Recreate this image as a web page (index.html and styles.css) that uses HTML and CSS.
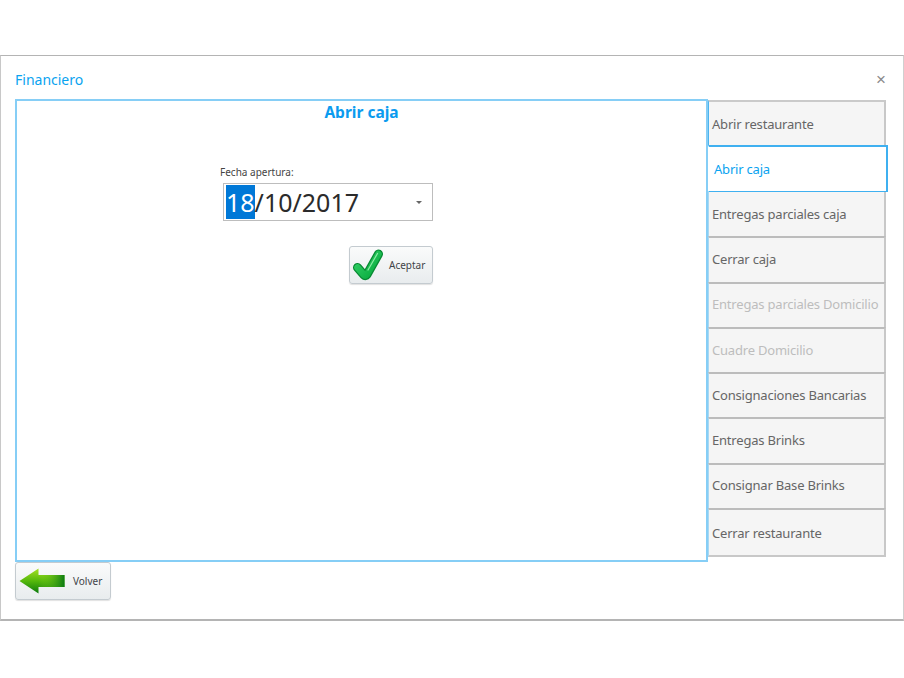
FILE: index.html
```html
<!DOCTYPE html>
<html lang="es">
<head>
<meta charset="utf-8">
<title>Financiero</title>
<link rel="stylesheet" href="styles.css">
</head>
<body>
<div class="window">
  <header class="header">
    <span class="title">Financiero</span>
    <span class="close">×</span>
  </header>
  <div class="main">
    <section class="panel">
      <h1 class="panel-title">Abrir caja</h1>
      <div class="form">
        <label class="label">Fecha apertura:</label>
        <div class="date">
          <span class="date-text"><span class="sel">18</span>/10/2017</span>
          <span class="caret"></span>
        </div>
        <button class="btn btn-ok">
          <svg class="ok-icon" width="32" height="32" viewBox="0 0 32 32">
            <defs>
              <linearGradient id="g1" x1="0" y1="0" x2="1" y2="1">
                <stop offset="0" stop-color="#35d268"/>
                <stop offset="1" stop-color="#05a83b"/>
              </linearGradient>
            </defs>
            <path d="M4.5 18.5 L11 26 Q12.5 27.5 14 25.5 L25.5 5" fill="none" stroke="#078a32" stroke-width="9" stroke-linecap="round" stroke-linejoin="round"/>
            <path d="M4.5 18.5 L11 26 Q12.5 27.5 14 25.5 L25.5 5" fill="none" stroke="url(#g1)" stroke-width="6.5" stroke-linecap="round" stroke-linejoin="round"/>
            <path d="M15 21 L24.5 4.5" fill="none" stroke="#8cecA4" stroke-width="1.2" stroke-linecap="round"/>
          </svg>
          <span>Aceptar</span>
        </button>
      </div>
    </section>
    <nav class="tabs">
      <a class="tab tab-1">Abrir restaurante</a>
      <a class="tab tab-active">Abrir caja</a>
      <a class="tab tab-next">Entregas parciales caja</a>
      <a class="tab">Cerrar caja</a>
      <a class="tab tab-off">Entregas parciales Domicilio</a>
      <a class="tab tab-off">Cuadre Domicilio</a>
      <a class="tab">Consignaciones Bancarias</a>
      <a class="tab">Entregas Brinks</a>
      <a class="tab">Consignar Base Brinks</a>
      <a class="tab tab-last">Cerrar restaurante</a>
    </nav>
  </div>
  <button class="btn btn-back">
    <svg width="46" height="26" viewBox="0 0 46 26">
      <defs>
        <linearGradient id="g2" x1="0" y1="0" x2="0" y2="1">
          <stop offset="0" stop-color="#a6e022"/>
          <stop offset="0.5" stop-color="#55b80c"/>
          <stop offset="1" stop-color="#0b7a0e"/>
        </linearGradient>
        <linearGradient id="g3" x1="0" y1="0" x2="1" y2="0">
          <stop offset="0" stop-color="#8fdc1a" stop-opacity="0"/>
          <stop offset="1" stop-color="#0a7a12"/>
        </linearGradient>
      </defs>
      <path d="M0.5 13 L19.5 0.5 V7 H45.5 V19 H19.5 V25.5 Z" fill="url(#g2)"/>
      <path d="M19.5 7 H45.5 V19 H19.5 Z" fill="url(#g3)"/>
    </svg>
    <span>Volver</span>
  </button>
</div>
</body>
</html>
```
FILE: styles.css
```css
* { box-sizing: border-box; }
html, body { margin: 0; padding: 0; background: #fff; }
body { font-family: "Noto Sans", sans-serif; height: 678px; overflow: hidden; padding-top: 55px; }
.window {
  height: 566px;
  border: 1px solid #b4b4b4;
  border-right-color: #d0d0d0;
  border-left-color: #c8c8c8;
  border-bottom: 2px solid #b4b4b4;
  padding: 0 14px;
  display: flex;
  flex-direction: column;
}
.header {
  height: 43px;
  flex: none;
  display: flex;
  justify-content: space-between;
  padding-top: 15px;
  padding-right: 3px;
}
.title { font: 14px/18px "Noto Sans", sans-serif; color: #0aa3f0; }
.close { font: 17px/18px "Liberation Sans", sans-serif; color: #8a8a8a; }
.main { display: flex; height: 463px; flex: none; }
.panel {
  width: 693px;
  flex: none;
  border: 2px solid #86cef6;
  text-align: center;
  display: flex;
  flex-direction: column;
}
.panel-title {
  margin: 1px 0 0;
  font: bold 15.5px/20px "Noto Sans", sans-serif;
  color: #0a9bef;
}
.form {
  width: 213px;
  margin: 43px 0 0 203px;
  text-align: left;
  display: flex;
  flex-direction: column;
}
.label { font: 10px/14px "Noto Sans", sans-serif; color: #444; }
.date {
  width: 210px;
  height: 38px;
  margin: 4px 0 0 3px;
  border: 1px solid #bdbdbd;
  display: flex;
  align-items: center;
  justify-content: space-between;
  padding: 0 10px 0 2px;
  background: #fff;
}
.date-text { font: 25px/29px "Noto Sans", sans-serif; color: #2b2b2b; }
.sel { background: #0078d7; color: #fff; }
.caret {
  width: 0; height: 0;
  border-left: 3px solid transparent;
  border-right: 3px solid transparent;
  border-top: 3px solid #666;
}
.btn {
  border: 1px solid #c4cbd0;
  border-radius: 3px;
  background: linear-gradient(#fafbfb, #e8ecee);
  font: 10px/14px "Noto Sans", sans-serif;
  color: #3f4448;
  display: flex;
  align-items: center;
  padding: 0;
  cursor: pointer;
  box-shadow: 0 1px 1px rgba(0,0,0,.12);
}
.btn-ok {
  width: 84px;
  height: 38px;
  margin: 25px 0 0 129px;
  padding-left: 3px;
  gap: 4px;
}
.btn-back {
  width: 96px;
  height: 38px;
  margin-top: 0;
  padding-left: 3px;
  gap: 8px;
  flex: none;
}
.tabs { display: flex; flex-direction: column; width: 180px; flex: none; padding-top: 1px; }
.tab {
  height: 45.3px;
  width: 178px;
  flex: none;
  display: flex;
  align-items: center;
  padding: 0 0 2px 3px;
  background: #f5f5f5;
  border-right: 2px solid #c8c8c8;
  border-left: 1px solid #a9d8f2;
  border-top: 2px solid #bcbcbc;
  font: 13px/18px "Noto Sans", sans-serif;
  letter-spacing: -0.2px;
  color: #666;
  white-space: nowrap;
}
.tab-1 { height: 45px; padding: 1px 0 0 3px; border-top-color: #cacaca; border-left-color: #4db4ef; }
.tab-active {
  height: 47px;
  width: 180px;
  background: #fff;
  color: #0aa3f0;
  padding: 0 0 1px 5px;
  border: 1px solid #3fb0f0;
  border-top-width: 2px;
  border-right-width: 2px;
  border-left-color: #fff;
}
.tab-next { height: 44.3px; border-top: 0; padding-bottom: 0; }
.tab-off { color: #bdbdbd; }
.tab-last { height: 49px; border-bottom: 2px solid #c8c8c8; padding-bottom: 0; }
```
